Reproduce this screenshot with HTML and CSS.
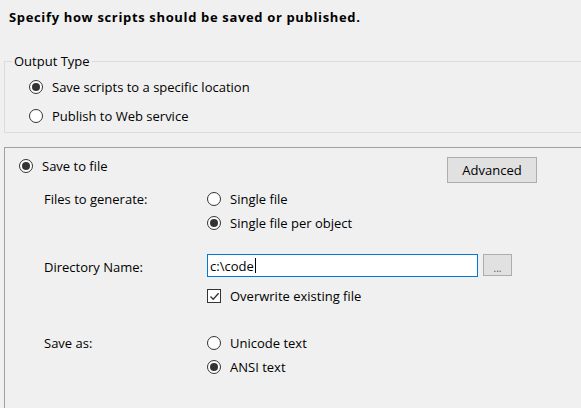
FILE: index.html
```html
<!DOCTYPE html>
<html>
<head>
<meta charset="utf-8">
<link rel="stylesheet" href="styles.css">
</head>
<body>
<div class="page">
  <div class="header"><h1 class="title">Specify how scripts should be saved or published.</h1></div>

  <fieldset class="group">
    <legend class="legend">Output Type</legend>
    <div class="opt-row"><span class="radio checked"></span><span class="opt-text">Save scripts to a specific location</span></div>
    <div class="opt-row gap"><span class="radio"></span><span class="opt-text">Publish to Web service</span></div>
  </fieldset>

  <div class="panel">
    <div class="top-row">
      <div class="save-file"><span class="radio checked"></span><span class="opt-text">Save to file</span></div>
      <div class="btn adv">Advanced</div>
    </div>

    <div class="form">
      <div class="label r1">Files to generate:</div>
      <div class="ctl r1"><span class="radio"></span><span class="opt-text">Single file</span></div>
      <div class="ctl r2"><span class="radio checked"></span><span class="opt-text">Single file per object</span></div>

      <div class="label r3">Directory Name:</div>
      <div class="ctl r3 dir">
        <div class="textbox"><span class="tb-text">c:\code</span><span class="caret"></span></div>
        <div class="btn dots">...</div>
      </div>
      <div class="ctl r4"><span class="check"><svg width="11" height="11" viewBox="0 0 11 11"><path d="M1.5 5.5 L4.2 8.3 L9.6 2.2" fill="none" stroke="#333" stroke-width="1.3"/></svg></span><span class="opt-text">Overwrite existing file</span></div>

      <div class="label r5">Save as:</div>
      <div class="ctl r5"><span class="radio"></span><span class="opt-text">Unicode text</span></div>
      <div class="ctl r6"><span class="radio checked"></span><span class="opt-text">ANSI text</span></div>
    </div>
  </div>
</div>
</body>
</html>
```

FILE: styles.css
```css
html, body {
  margin: 0;
  padding: 0;
  background: #f0f0f0;
}
body {
  width: 581px;
  height: 408px;
  overflow: hidden;
  font-family: "Open Sans", "Noto Sans", sans-serif;
  font-size: 13px;
  color: #000;
}
.page {
  width: 581px;
  height: 408px;
  overflow: hidden;
}
.header {
  height: 34px;
  padding-left: 9px;
  box-sizing: border-box;
  padding-top: 10px;
}
.title {
  margin: 0;
  font-size: 13px;
  line-height: 14px;
  font-weight: bold;
  letter-spacing: 0.65px;
  white-space: nowrap;
}
.group {
  margin: 20px -20px 0 4px;
  padding: 7px 0 4px 0;
  border: 1px solid #dcdcdc;
  min-width: 0;
}
.legend {
  padding: 0 2px;
  margin-left: 7px;
  line-height: 14px;
}
.opt-row {
  display: flex;
  align-items: center;
  height: 24px;
  margin-left: 24px;
}
.opt-row.gap {
  margin-top: 5px;
}
.radio {
  width: 14px;
  height: 14px;
  box-sizing: border-box;
  border: 1px solid #333;
  border-radius: 50%;
  background: #fff;
  display: inline-flex;
  align-items: center;
  justify-content: center;
  flex: none;
}
.radio.checked::after {
  content: "";
  width: 8px;
  height: 8px;
  border-radius: 50%;
  background: #333;
}
.opt-text {
  margin-left: 9px;
  line-height: 14px;
  white-space: nowrap;
}
.panel {
  margin: 14px -20px 0 4px;
  border-top: 1px solid #a0a0a0;
  border-left: 1px solid #a0a0a0;
  height: 280px;
}
.top-row {
  display: flex;
  justify-content: space-between;
  padding-top: 9px;
  width: 532px;
  height: 26px;
}
.save-file {
  display: flex;
  align-items: center;
  height: 14px;
  margin-top: 2px;
  margin-left: 14px;
}
.btn {
  box-sizing: border-box;
  border: 1px solid #adadad;
  background: #e1e1e1;
  display: flex;
  align-items: center;
  justify-content: center;
}
.adv {
  width: 90px;
  height: 26px;
}
.form {
  display: grid;
  grid-template-columns: 163px auto;
  grid-template-rows: 24px 24px 19px 23px 7px 24px 23px 24px 24px;
  margin-top: 4px;
  padding-left: 39px;
}
.label {
  grid-column: 1;
  display: flex;
  align-items: center;
  white-space: nowrap;
}
.ctl {
  grid-column: 2;
  display: flex;
  align-items: center;
}
.r1 { grid-row: 1; }
.r2 { grid-row: 2; }
.r3 { grid-row: 4; }
.r4 { grid-row: 6; }
.r5 { grid-row: 8; }
.r6 { grid-row: 9; }
.label.r3 { padding-top: 3px; }
.dir {
  align-items: stretch;
}
.textbox {
  width: 271px;
  height: 23px;
  box-sizing: border-box;
  border: 1px solid #0078d7;
  background: #fff;
  display: flex;
  align-items: center;
  padding-left: 2px;
}
.caret {
  width: 1px;
  height: 15px;
  background: #000;
  margin-left: 1px;
}
.dots {
  width: 29px;
  height: 22px;
  margin-left: 5px;
  align-items: flex-end;
  padding-bottom: 2px;
  font-size: 10px;
  line-height: 10px;
  color: #555;
}
.check {
  width: 14px;
  height: 14px;
  box-sizing: border-box;
  border: 1px solid #333;
  background: #fff;
  display: inline-flex;
  align-items: center;
  justify-content: center;
  flex: none;
}
```
